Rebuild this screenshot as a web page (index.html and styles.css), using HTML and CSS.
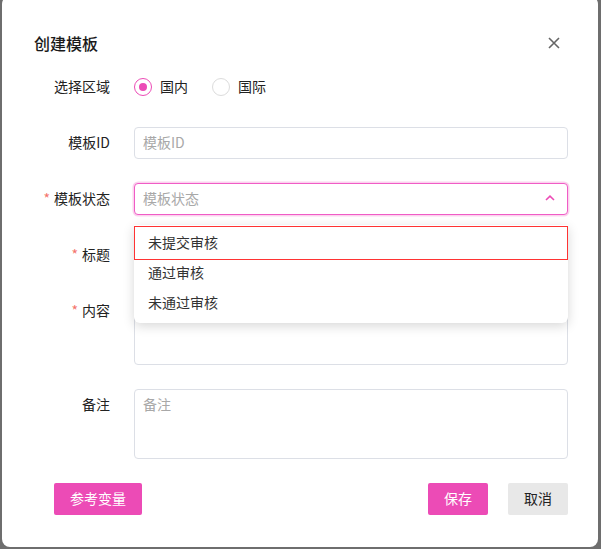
FILE: index.html
```html
<!DOCTYPE html>
<html lang="zh">
<head>
<meta charset="utf-8">
<link rel="stylesheet" href="styles.css">
</head>
<body>
<div class="dialog">
  <div class="header">
    <div class="title">创建模板</div>
    <svg class="close" width="12" height="12" viewBox="0 0 12 12"><path d="M1 1L11 11M11 1L1 11" stroke="#666" stroke-width="1.6" fill="none"/></svg>
  </div>
  <div class="form">
    <div class="row">
      <div class="label">选择区域</div>
      <div class="control radios">
        <span class="radio checked"><span class="dot"></span></span><span class="rtext">国内</span>
        <span class="radio"></span><span class="rtext">国际</span>
      </div>
    </div>
    <div class="row">
      <div class="label">模板ID</div>
      <div class="control"><div class="input"><span class="ph">模板ID</span></div></div>
    </div>
    <div class="row">
      <div class="label"><span class="req">*</span>模板状态</div>
      <div class="control sel-wrap">
        <div class="input focus"><span class="ph">模板状态</span>
          <svg class="chev" width="10" height="6" viewBox="0 0 10 6"><path d="M1 5L5 1.2L9 5" stroke="#ec4bb6" stroke-width="1.6" fill="none"/></svg>
        </div>
        <div class="menu">
          <div class="item hl">未提交审核</div>
          <div class="item i2">通过审核</div>
          <div class="item">未通过审核</div>
        </div>
      </div>
    </div>
    <div class="row">
      <div class="label"><span class="req">*</span>标题</div>
      <div class="control"><div class="input"></div></div>
    </div>
    <div class="row tall">
      <div class="label"><span class="req">*</span>内容</div>
      <div class="control"><div class="textarea"></div></div>
    </div>
    <div class="row tall">
      <div class="label">备注</div>
      <div class="control"><div class="textarea"><span class="ph">备注</span></div></div>
    </div>
  </div>
  <div class="footer">
    <button class="btn pink wide">参考变量</button>
    <div class="spacer"></div>
    <button class="btn pink">保存</button>
    <button class="btn gray">取消</button>
  </div>
</div>
</body>
</html>
```
FILE: styles.css
```css
html, body {
  margin: 0;
  padding: 0;
  background: #6e6e6e;
  height: 549px;
  overflow: hidden;
  font-family: "Noto Sans CJK SC", "Noto Sans", sans-serif;
  font-size: 14px;
  color: #222;
}
.dialog {
  margin: -4px 3px 0 2px;
  height: 551px;
  background: #fff;
  border-radius: 8px;
  box-sizing: border-box;
  padding-top: 36px;
}
.header {
  display: flex;
  align-items: center;
  justify-content: space-between;
  height: 24px;
  padding: 0 38px 0 32px;
}
.title {
  font-size: 16px;
  font-weight: 500;
  color: #1a1a1a;
  line-height: 22px;
  padding-bottom: 2px;
}
.close { display: block; margin-top: -2px; }
.form {
  margin-top: 15px;
  padding: 0 30px 0 32px;
}
.row {
  display: flex;
  height: 32px;
  margin-bottom: 24px;
}
.row.tall { height: 70px; }
.label {
  width: 76px;
  flex: none;
  text-align: right;
  line-height: 30px;
  color: #222;
  margin-right: 24px;
}
.req { color: #f4736b; margin-right: 4px; }
.control { flex: 1; position: relative; }
.radios { display: flex; align-items: center; }
.radio {
  width: 18px;
  height: 18px;
  box-sizing: border-box;
  border: 1px solid #dcdcdc;
  border-radius: 50%;
  display: flex;
  align-items: center;
  justify-content: center;
  margin-right: 8px;
}
.radio.checked { border-color: #ec4bb6; }
.dot { width: 8px; height: 8px; border-radius: 50%; background: #ec4bb6; }
.rtext { margin-right: 24px; color: #222; line-height: 30px; padding-bottom: 2px; }
.input, .textarea {
  box-sizing: border-box;
  height: 32px;
  border: 1px solid #dcdfe6;
  border-radius: 4px;
  padding: 0 8px 2px;
  display: flex;
  align-items: center;
  background: #fff;
}
.textarea { height: 70px; align-items: flex-start; padding-top: 4px; }
.ph { color: #a8a8a8; }
.input.focus {
  border-color: #f05cc6;
  box-shadow: 0 0 0 1.5px #fbd3ee;
  justify-content: space-between;
  padding-right: 12px;
}
.chev { display: block; }
.menu {
  position: absolute;
  left: 0;
  right: 0;
  top: 42px;
  background: #fff;
  border-radius: 0 0 6px 6px;
  box-shadow: 0 3px 12px rgba(0,0,0,0.16);
  padding: 1px 0 5px;
  z-index: 2;
  color: #333;
}
.item {
  height: 30px;
  line-height: 28px;
  padding-left: 14px;
  box-sizing: border-box;
}
.item.hl {
  height: 34px;
  line-height: 30px;
  border: 1px solid #f33;
  padding-left: 13px;
}
.item.i2 { height: 28px; line-height: 24px; }
.footer {
  display: flex;
  padding: 0 30px 0 52px;
}
.spacer { flex: 1; }
.btn {
  height: 32px;
  border: none;
  border-radius: 2px;
  font-family: inherit;
  font-size: 14px;
  padding: 0 0 2px;
  width: 60px;
}
.btn.wide { width: 88px; }
.btn.pink { background: #ec4bb6; color: #fff; }
.btn.gray { background: #e8e8e8; color: #222; margin-left: 20px; }
```
